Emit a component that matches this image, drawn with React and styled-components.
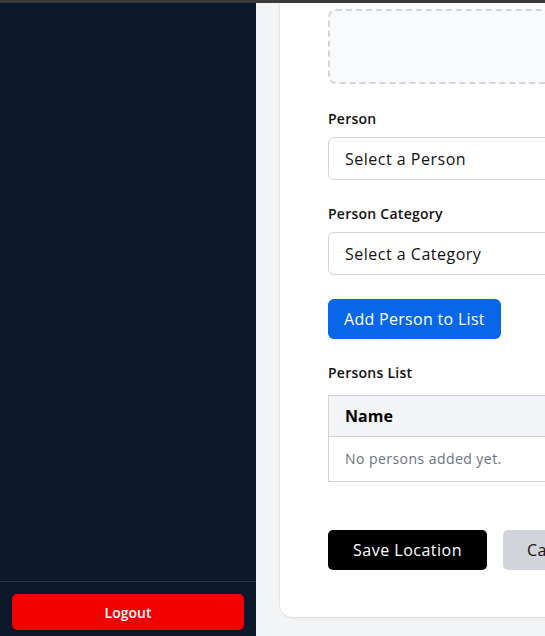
import React from "react";
import styled, { createGlobalStyle } from "styled-components";

const Global = createGlobalStyle`
  html, body { margin: 0; padding: 0; }
  body {
    font-family: "Open Sans", "Noto Sans", sans-serif;
    background: #f3f4f6;
    overflow: hidden;
  }
  * { box-sizing: border-box; }
`;

const Page = styled.div`
  display: flex;
  flex-direction: column;
  height: 636px;
  overflow: hidden;
`;

const TopStrip = styled.div`
  height: 3px;
  flex: none;
  background: #3a3a3a;
`;

const Body = styled.div`
  display: flex;
  flex: 1;
  min-height: 0;
`;

const Sidebar = styled.aside`
  width: 256px;
  flex: none;
  background: #0c192b;
  display: flex;
  flex-direction: column;
  justify-content: flex-end;
`;

const SidebarFooter = styled.div`
  border-top: 1px solid #2c3646;
  padding: 12px 12px 6px;
`;

const LogoutButton = styled.button`
  width: 100%;
  height: 36px;
  border: none;
  border-radius: 5px;
  background: #f20000;
  color: #fff;
  font-family: inherit;
  font-size: 14px;
  font-weight: 600;
`;

const Main = styled.main`
  flex: 1;
  min-width: 0;
  overflow: hidden;
  background: #f3f4f6;
  padding: 0 0 0 24px;
`;

const Card = styled.section`
  width: 760px;
  margin-top: -40px;
  background: #fff;
  border-radius: 12px;
  box-shadow: 0 1px 3px rgba(0, 0, 0, 0.08), 0 0 0 1px rgba(0, 0, 0, 0.03);
  padding: 46px 48px 47px;
  display: flex;
  flex-direction: column;
`;

const DropZone = styled.div`
  height: 75px;
  border: 2px dashed #d1d5db;
  border-radius: 8px;
  background: #f9fafb;
`;

const Field = styled.div`
  display: flex;
  flex-direction: column;
  gap: ${(p) => p.$gap || 8}px;
  margin-top: ${(p) => p.$top}px;
`;

const Label = styled.div`
  font-size: 14px;
  line-height: 20px;
  font-weight: 600;
  letter-spacing: 0.25px;
  color: #111;
`;

const SelectBox = styled.div`
  height: ${(p) => p.$h}px;
  border: 1px solid #d1d5db;
  border-radius: 6px;
  padding: 0 16px;
  display: flex;
  align-items: center;
  font-size: 16px;
  letter-spacing: 0.5px;
  color: #111;
`;

const PrimaryButton = styled.button`
  align-self: flex-start;
  margin-top: 24px;
  height: 40px;
  padding: 0 16px;
  border: none;
  border-radius: 6px;
  background: #0767e8;
  color: #fff;
  font-family: inherit;
  font-size: 16px;
  letter-spacing: 0.3px;
`;

const Table = styled.table`
  border-collapse: collapse;
  width: 100%;
  border: 1px solid #d1d5db;
`;

const Th = styled.th`
  text-align: left;
  background: #f3f4f6;
  border-bottom: 1px solid #d1d5db;
  padding: 8px 16px;
  font-size: 16px;
  line-height: 24px;
  font-weight: 700;
  color: #000;
`;

const Td = styled.td`
  padding: 12px 16px;
  font-size: 14px;
  line-height: 20px;
  letter-spacing: 0.45px;
  color: #6b7280;
`;

const Actions = styled.div`
  display: flex;
  gap: 16px;
  margin-top: 48px;
`;

const ActionButton = styled.button`
  height: 40px;
  padding: 0 24px;
  border: none;
  border-radius: 5px;
  font-family: inherit;
  font-size: 16px;
  letter-spacing: 0.5px;
  white-space: nowrap;
  background: ${(p) => (p.$dark ? "#000" : "#d1d5db")};
  color: ${(p) => (p.$dark ? "#fff" : "#111")};
  min-width: ${(p) => (p.$dark ? "159px" : "auto")};
`;

export default function App() {
  return (
    <>
      <Global />
      <Page>
        <TopStrip />
        <Body>
          <Sidebar>
            <SidebarFooter>
              <LogoutButton>Logout</LogoutButton>
            </SidebarFooter>
          </Sidebar>
          <Main>
            <Card>
              <DropZone />
              <Field $top={25}>
                <Label>Person</Label>
                <SelectBox $h={43}>Select a Person</SelectBox>
              </Field>
              <Field $top={24}>
                <Label>Person Category</Label>
                <SelectBox $h={43}>Select a Category</SelectBox>
              </Field>
              <PrimaryButton>Add Person to List</PrimaryButton>
              <Field $top={24} $gap={12}>
                <Label>Persons List</Label>
                <Table>
                  <thead>
                    <tr>
                      <Th>Name</Th>
                    </tr>
                  </thead>
                  <tbody>
                    <tr>
                      <Td>No persons added yet.</Td>
                    </tr>
                  </tbody>
                </Table>
              </Field>
              <Actions>
                <ActionButton $dark>Save Location</ActionButton>
                <ActionButton>Cancel</ActionButton>
              </Actions>
            </Card>
          </Main>
        </Body>
      </Page>
    </>
  );
}
